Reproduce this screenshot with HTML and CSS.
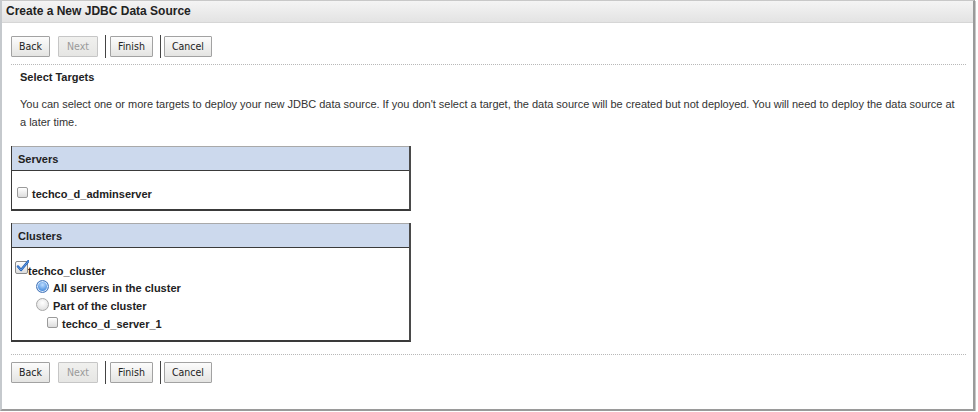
FILE: index.html
```html
<!DOCTYPE html>
<html>
<head>
<meta charset="utf-8">
<title>Create a New JDBC Data Source</title>
<link rel="stylesheet" href="styles.css">
</head>
<body>
<div class="frame">
  <div class="titlebar">Create a New JDBC Data Source</div>
  <div class="content">
    <div class="toolbar">
      <span class="btn w-back">Back</span>
      <span class="btn w-next disabled">Next</span>
      <span class="sep"></span>
      <span class="btn w-finish">Finish</span>
      <span class="sep"></span>
      <span class="btn w-cancel">Cancel</span>
    </div>
    <div class="dotted"></div>
    <div class="intro">
      <div class="section-title">Select Targets</div>
      <p class="desc">You can select one or more targets to deploy your new JDBC data source. If you don't select a target, the data source will be created but not deployed. You will need to deploy the data source at a later time.</p>
    </div>

    <div class="box servers">
      <div class="box-head">Servers</div>
      <div class="box-body">
        <div class="row lvl0s"><span class="cb"></span><span class="lbl">techco_d_adminserver</span></div>
      </div>
    </div>

    <div class="box clusters">
      <div class="box-head">Clusters</div>
      <div class="box-body">
        <div class="row lvl0"><span class="cb checked"><svg width="13" height="13" viewBox="0 0 13 13"><path d="M2 6.5 L5 10 L12.5 1" fill="none" stroke="#1f5fb8" stroke-width="2.4" stroke-linecap="round" stroke-linejoin="round"/><path d="M2 6.5 L5 10 L12.5 1" fill="none" stroke="#6fa5e6" stroke-width="0.9" stroke-linecap="round" stroke-linejoin="round"/></svg></span><span class="lbl tight">techco_cluster</span></div>
        <div class="row lvl1"><span class="radio on"></span><span class="lbl">All servers in the cluster</span></div>
        <div class="row lvl1"><span class="radio"></span><span class="lbl">Part of the cluster</span></div>
        <div class="row lvl2"><span class="cb"></span><span class="lbl">techco_d_server_1</span></div>
      </div>
    </div>

    <div class="dotted bottom"></div>
    <div class="toolbar">
      <span class="btn w-back">Back</span>
      <span class="btn w-next disabled">Next</span>
      <span class="sep"></span>
      <span class="btn w-finish">Finish</span>
      <span class="sep"></span>
      <span class="btn w-cancel">Cancel</span>
    </div>
  </div>
</div>
</body>
</html>
```

FILE: styles.css
```css
html, body {
  margin: 0;
  padding: 0;
  background: #ffffff;
}

body {
  font-family: "Liberation Sans", Arial, sans-serif;
  font-size: 12px;
  color: #333333;
}

.frame {
  width: 971px;
  height: 408px;
  border-left: 2px solid #c5c9cd;
  border-top: 1px solid #c8c8c8;
  border-right: 2px solid #9a9a9a;
  border-bottom: 2px solid #9a9a9a;
  box-shadow: 1px 1px 0 #c8c8c8;
  background: #ffffff;
}

.titlebar {
  height: 21px;
  line-height: 21px;
  padding-left: 4px;
  font-weight: bold;
  font-size: 12px;
  color: #222222;
  background: linear-gradient(#f4f4f4, #e3e3e3);
  border-bottom: 1px solid #d6d6d6;
}

.content {
  padding: 12px 9px 0 9px;
}

.toolbar {
  display: flex;
  align-items: center;
  height: 23px;
}

.btn {
  box-sizing: border-box;
  height: 21px;
  line-height: 19px;
  text-align: center;
  font-family: "DejaVu Sans Condensed", "DejaVu Sans", sans-serif;
  font-size: 10.5px;
  color: #222222;
  border: 1px solid #a2a2a2;
  border-radius: 1px;
  background: linear-gradient(#fcfcfc, #e4e4e2);
}

.btn.disabled {
  color: #9a9a9a;
  border-color: #c6c6c6;
  background: linear-gradient(#f0f0ee, #e6e6e4);
}

.w-back { width: 39px; }
.w-next { width: 40px; margin-left: 8px; }
.w-finish { width: 43px; }
.w-cancel { width: 48px; }

.sep {
  width: 1px;
  height: 23px;
  background: #444444;
  margin-left: 7px;
  margin-right: 4px;
}
.w-finish + .sep {
  margin-left: 7px;
  margin-right: 3px;
}

.dotted {
  margin-top: 6px;
  width: 955px;
  border-top: 1px dotted #b8b8b8;
}

.dotted.bottom {
  margin-top: 12px;
  margin-bottom: 6px;
}

.intro {
  padding-left: 9px;
}

.section-title {
  font-weight: bold;
  font-size: 11px;
  color: #222222;
  margin-top: 5px;
  line-height: 14px;
}

.desc {
  margin: 11px 0 0 0;
  width: 936px;
  font-size: 11px;
  letter-spacing: -0.02px;
  line-height: 18px;
  color: #333333;
}

.box {
  width: 400px;
  box-sizing: border-box;
  border-left: 1px solid #3a3a3a;
  border-right: 2px solid #4a4a4a;
  border-bottom: 2px solid #3a3a3a;
  margin-top: 12px;
}

.servers { margin-top: 15px; }

.box-head {
  height: 25px;
  line-height: 24px;
  box-sizing: border-box;
  border-top: 1px solid #a9a9a9;
  border-bottom: 1px solid #3a3a3a;
  background: #ccd9ed;
  font-weight: bold;
  font-size: 11px;
  color: #222222;
  padding-left: 6px;
}

.servers .box-body {
  height: 38px;
  padding-top: 14px;
  box-sizing: border-box;
}

.clusters .box-body {
  height: 92px;
  padding-top: 13px;
  box-sizing: border-box;
}

.row {
  display: flex;
  align-items: center;
  height: 18px;
  font-weight: bold;
  font-size: 11px;
  color: #222222;
}

.lvl0s { padding-left: 5px; }
.lvl0 { padding-left: 3px; }
.lvl1 { padding-left: 24px; }
.lvl2 { padding-left: 35px; }

.lbl { margin-left: 4px; }
.lbl.tight { margin-left: 0; margin-top: 2px; }

.cb {
  display: inline-block;
  box-sizing: border-box;
  width: 11px;
  height: 11px;
  border: 1px solid #9a9a9a;
  border-radius: 2px;
  background: linear-gradient(#ffffff, #dcdcdc);
  margin-top: -4px;
}

.cb.checked {
  position: relative;
  width: 13px;
  height: 13px;
  border-color: #8a8a8a;
  margin-top: -5px;
}
.cb.checked svg {
  position: absolute;
  left: 0;
  top: -2px;
}

.radio {
  display: inline-block;
  box-sizing: border-box;
  width: 13px;
  height: 13px;
  border: 1px solid #a8a8a8;
  border-radius: 50%;
  background: radial-gradient(circle at 50% 35%, #ffffff, #d8d8d8);
  margin-top: -4px;
}

.radio.on {
  border-color: #4a78b8;
  background: radial-gradient(circle at 50% 35%, #bcdcff 0, #5d9be4 55%, #2c66be 100%);
  box-shadow: inset 0 0 0 1px #d7e8fb;
}
```
